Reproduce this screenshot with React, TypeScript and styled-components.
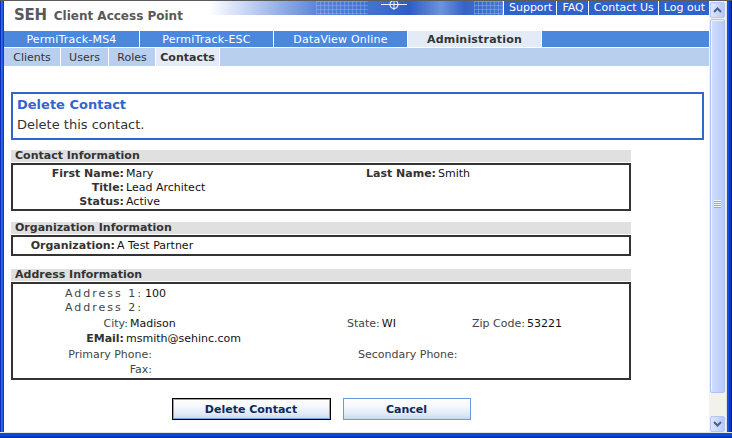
import React from 'react';
import styled, { createGlobalStyle } from 'styled-components';

const Global = createGlobalStyle`
  html, body { margin: 0; padding: 0; overflow: hidden; background: #fff; }
  body { font-family: "DejaVu Sans", Verdana, sans-serif; font-size: 11px; color: #222; }
  * { box-sizing: border-box; }
`;

const Frame = styled.div`
  width: 732px;
  height: 438px;
  display: flex;
  flex-direction: column;
  border-top: 1px solid #5c5c5c;
`;

const Middle = styled.div`
  display: flex;
  height: 431px;
`;

const LeftEdge = styled.div`
  width: 4px;
  background: linear-gradient(to right, #0a2db0 0, #0a2db0 25%, #2a6ef2 25%, #2a6ef2 50%, #1d5ae6 50%, #1d5ae6 75%, #0b3ccc 75%);
`;

const RightEdge = styled.div`
  width: 6px;
  background: linear-gradient(to right, #e4e2dc 0, #e4e2dc 1px, #1650e2 1px, #1650e2 3px, #0a36c8 3px, #0a36c8 5px, #001c8f 5px);
`;

const BottomEdge = styled.div`
  height: 6px;
  border-top: 1px solid #e6e6e6;
  background: linear-gradient(to bottom, #0a48de 0, #0f4ad8 40%, #0029b8 100%);
`;

const Page = styled.div`
  width: 705px;
  display: flex;
  flex-direction: column;
  overflow: hidden;
  background: #fff;
`;

/* ---------- header ---------- */
const Header = styled.div`
  height: 30px;
  display: flex;
  align-items: flex-start;
`;

const Title = styled.div`
  flex: 1;
  padding: 5px 0 0 10px;
  color: #595959;
  font-weight: bold;
  font-size: 12px;
  white-space: nowrap;
`;

const Brand = styled.span`
  font-size: 15px;
  margin-right: 7px;
  letter-spacing: -0.3px;
`;

const Banner = styled.div`
  position: relative;
  width: 294px;
  height: 14px;
  background:
    repeating-linear-gradient(to right, rgba(255,255,255,0.18) 0 1px, transparent 1px 4px) 107px 0 / 52px 14px no-repeat,
    repeating-linear-gradient(to bottom, rgba(255,255,255,0.18) 0 1px, transparent 1px 4px) 107px 0 / 52px 14px no-repeat,
    repeating-linear-gradient(to right, rgba(255,255,255,0.2) 0 1px, transparent 1px 4px) 265px 0 / 29px 14px no-repeat,
    repeating-linear-gradient(to bottom, rgba(255,255,255,0.2) 0 1px, transparent 1px 4px) 265px 0 / 29px 14px no-repeat,
    linear-gradient(to right, #ffffff 0, #c9d8f4 35px, #7f9fe0 85px, #5a82d6 110px, #3f6fd0 170px, #2e5cc3 200px, #6d92dc 232px, #3763c8 255px, #4a76d4 294px);
`;

const Crosshair = styled.svg`
  position: absolute;
  left: 172px;
  top: 0;
`;

const Links = styled.div`
  display: flex;
  height: 14px;
  background: #3062cc;
`;

const LinkItem = styled.a`
  padding: 0 4px 0 5px;
  border-left: 1px solid #fff;
  color: #fff;
  font-size: 11px;
  line-height: 14px;
  text-decoration: none;
  white-space: nowrap;
`;

/* ---------- tabs ---------- */
const TabBar = styled.div`
  display: flex;
  height: 16px;
  background: #4a87dd;
  margin-bottom: 1px;
`;

const Tab = styled.div<{ $w: number; $active?: boolean }>`
  width: ${p => p.$w}px;
  border-right: 1px solid #fff;
  display: flex;
  align-items: center;
  justify-content: center;
  font-size: 11px;
  color: ${p => (p.$active ? '#333' : '#fff')};
  background: ${p => (p.$active ? '#e3ebf7' : 'transparent')};
  font-weight: ${p => (p.$active ? 'bold' : 'normal')};
  letter-spacing: 0.2px;
`;

const SubBar = styled.div`
  display: flex;
  height: 18px;
  background: #b9cfee;
`;

const SubTab = styled.div<{ $w: number; $active?: boolean }>`
  width: ${p => p.$w}px;
  border-right: 1px solid #fff;
  display: flex;
  align-items: center;
  justify-content: center;
  font-size: 11px;
  color: #333;
  background: ${p => (p.$active ? '#e3ebf7' : 'transparent')};
  font-weight: ${p => (p.$active ? 'bold' : 'normal')};
`;

/* ---------- content ---------- */
const Content = styled.div`
  padding: 26px 5px 0 7px;
  display: flex;
  flex-direction: column;
`;

const Notice = styled.div`
  height: 48px;
  border: 2px solid #3366cc;
  padding: 3px 0 0 4px;
`;

const NoticeTitle = styled.div`
  color: #3366cc;
  font-weight: bold;
  font-size: 13px;
  line-height: 16px;
`;

const NoticeText = styled.div`
  color: #333;
  font-size: 13px;
  line-height: 16px;
  margin-top: 4px;
`;

const Section = styled.div<{ $mt: number }>`
  width: 620px;
  margin-top: ${p => p.$mt}px;
`;

const SectionHead = styled.div`
  height: 12px;
  line-height: 12px;
  background: #e0e0e0;
  padding-left: 4px;
  margin-bottom: 1px;
  font-weight: bold;
  font-size: 11px;
  color: #333;
`;

const Box = styled.div<{ $pt: number; $pb: number }>`
  border: 2px solid #333;
  padding: ${p => p.$pt}px 0 ${p => p.$pb}px 0;
`;

const Row = styled.div<{ $h: number }>`
  display: flex;
  align-items: center;
  height: ${p => p.$h}px;
`;

const Pair = styled.div<{ $w?: number }>`
  display: flex;
  align-items: center;
  ${p => (p.$w ? `width: ${p.$w}px;` : 'flex: 1;')}
`;

const Label = styled.span<{ $w?: number; $bold?: boolean; $pl?: number; $ls?: number }>`
  ${p => (p.$w ? `width: ${p.$w}px; text-align: right;` : '')}
  padding-left: ${p => p.$pl ?? 0}px;
  letter-spacing: ${p => p.$ls ?? 0}px;
  font-weight: ${p => (p.$bold ? 'bold' : 'normal')};
  color: ${p => (p.$bold ? '#333' : '#444')};
  white-space: nowrap;
  flex-shrink: 0;
`;

const Value = styled.span`
  margin-left: 2px;
  color: #111;
  white-space: nowrap;
`;

const Buttons = styled.div`
  width: 620px;
  margin-top: 18px;
  display: flex;
  justify-content: center;
  gap: 12px;
`;

const Button = styled.button<{ $w: number; $focused?: boolean }>`
  width: ${p => p.$w}px;
  height: 22px;
  font-family: "DejaVu Sans", Verdana, sans-serif;
  font-size: 11px;
  font-weight: bold;
  color: #0c2a5e;
  border: 1px solid ${p => (p.$focused ? '#000' : '#6b98e2')};
  box-shadow: ${p => (p.$focused ? 'inset 0 0 0 1px #7aa3e8' : 'none')};
  background: linear-gradient(to bottom, #ffffff 0%, #f4f7fc 40%, #e1e9f6 75%, #c9d7ee 100%);
  padding: 0;
  cursor: pointer;
`;

/* ---------- scrollbar ---------- */
const Scrollbar = styled.div`
  width: 17px;
  display: flex;
  flex-direction: column;
  background: #f3f1ec;
  padding: 1px 1px 0 1px;
`;

const ScrollButton = styled.div`
  height: 16px;
  border: 1px solid #b4c7f3;
  border-radius: 2px;
  background: linear-gradient(to right, #dde7fe, #c3d4fc 60%, #b5c9f8);
  display: flex;
  align-items: center;
  justify-content: center;
`;

const Thumb = styled.div`
  margin-top: 1px;
  height: 374px;
  border: 1px solid #adc2f2;
  border-radius: 2px;
  background: linear-gradient(to right, #d3defd, #c4d4fc 50%, #b7caf9);
  box-shadow: inset 1px 1px 0 #eef3ff;
  display: flex;
  align-items: center;
  justify-content: center;
`;

const Track = styled.div`
  flex: 1;
`;

const Grip = styled.div`
  width: 7px;
  height: 8px;
  margin-bottom: 4px;
  background: repeating-linear-gradient(to bottom, #eef3ff 0 1px, #8faee9 1px 2px);
`;

export default function App() {
  return (
    <>
      <Global />
      <Frame>
        <Middle>
          <LeftEdge />
          <Page>
            <Header>
              <Title>
                <Brand>SEH</Brand>Client Access Point
              </Title>
              <Banner>
                <Crosshair width="26" height="9" viewBox="0 0 26 9">
                  <line x1="0" y1="3.5" x2="26" y2="3.5" stroke="#ffffff" strokeWidth="1" opacity="0.9" />
                  <line x1="13" y1="0" x2="13" y2="9" stroke="#ffffff" strokeWidth="1" opacity="0.9" />
                  <circle cx="13" cy="3.5" r="4" fill="none" stroke="#ffffff" strokeWidth="1.2" opacity="0.9" />
                </Crosshair>
              </Banner>
              <Links>
                <LinkItem href="#">Support</LinkItem>
                <LinkItem href="#">FAQ</LinkItem>
                <LinkItem href="#">Contact Us</LinkItem>
                <LinkItem href="#">Log out</LinkItem>
              </Links>
            </Header>

            <TabBar>
              <Tab $w={136}>PermiTrack-MS4</Tab>
              <Tab $w={134}>PermiTrack-ESC</Tab>
              <Tab $w={134}>DataView Online</Tab>
              <Tab $w={134} $active>Administration</Tab>
            </TabBar>
            <SubBar>
              <SubTab $w={57}>Clients</SubTab>
              <SubTab $w={48}>Users</SubTab>
              <SubTab $w={47}>Roles</SubTab>
              <SubTab $w={64} $active>Contacts</SubTab>
            </SubBar>

            <Content>
              <Notice>
                <NoticeTitle>Delete Contact</NoticeTitle>
                <NoticeText>Delete this contact.</NoticeText>
              </Notice>

              <Section $mt={10}>
                <SectionHead>Contact Information</SectionHead>
                <Box $pt={1} $pb={1}>
                  <Row $h={14}>
                    <Pair $w={353}>
                      <Label $w={111} $bold>First Name:</Label>
                      <Value>Mary</Value>
                    </Pair>
                    <Pair>
                      <Label $bold>Last Name:</Label>
                      <Value>Smith</Value>
                    </Pair>
                  </Row>
                  <Row $h={14}>
                    <Pair>
                      <Label $w={111} $bold>Title:</Label>
                      <Value>Lead Architect</Value>
                    </Pair>
                  </Row>
                  <Row $h={14}>
                    <Pair>
                      <Label $w={111} $bold>Status:</Label>
                      <Value>Active</Value>
                    </Pair>
                  </Row>
                </Box>
              </Section>

              <Section $mt={11}>
                <SectionHead>Organization Information</SectionHead>
                <Box $pt={1} $pb={2}>
                  <Row $h={14}>
                    <Pair>
                      <Label $w={102} $bold>Organization:</Label>
                      <Value>A Test Partner</Value>
                    </Pair>
                  </Row>
                </Box>
              </Section>

              <Section $mt={13}>
                <SectionHead>Address Information</SectionHead>
                <Box $pt={2} $pb={3}>
                  <Row $h={14}>
                    <Pair>
                      <Label $pl={52} $ls={2}>Address 1:</Label>
                      <Value>100</Value>
                    </Pair>
                  </Row>
                  <Row $h={14}>
                    <Pair>
                      <Label $pl={52} $ls={2}>Address 2:</Label>
                    </Pair>
                  </Row>
                  <Row $h={18}>
                    <Pair $w={334}>
                      <Label $w={115}>City:</Label>
                      <Value>Madison</Value>
                    </Pair>
                    <Pair $w={125}>
                      <Label>State:</Label>
                      <Value>WI</Value>
                    </Pair>
                    <Pair>
                      <Label>Zip Code:</Label>
                      <Value>53221</Value>
                    </Pair>
                  </Row>
                  <Row $h={13}>
                    <Pair>
                      <Label $w={111} $bold>EMail:</Label>
                      <Value>msmith@sehinc.com</Value>
                    </Pair>
                  </Row>
                  <Row $h={18}>
                    <Pair $w={345}>
                      <Label $w={139}>Primary Phone:</Label>
                    </Pair>
                    <Pair>
                      <Label>Secondary Phone:</Label>
                    </Pair>
                  </Row>
                  <Row $h={12}>
                    <Pair>
                      <Label $w={139}>Fax:</Label>
                    </Pair>
                  </Row>
                </Box>
              </Section>

              <Buttons>
                <Button $w={159} $focused>Delete Contact</Button>
                <Button $w={128}>Cancel</Button>
              </Buttons>
            </Content>
          </Page>
          <Scrollbar>
            <ScrollButton>
              <svg width="9" height="6" viewBox="0 0 9 6">
                <path d="M1 5 L4.5 1.5 L8 5" fill="none" stroke="#4d6185" strokeWidth="2" />
              </svg>
            </ScrollButton>
            <Thumb>
              <Grip />
            </Thumb>
            <Track />
            <ScrollButton>
              <svg width="9" height="6" viewBox="0 0 9 6">
                <path d="M1 1 L4.5 4.5 L8 1" fill="none" stroke="#4d6185" strokeWidth="2" />
              </svg>
            </ScrollButton>
          </Scrollbar>
          <RightEdge />
        </Middle>
        <BottomEdge />
      </Frame>
    </>
  );
}
